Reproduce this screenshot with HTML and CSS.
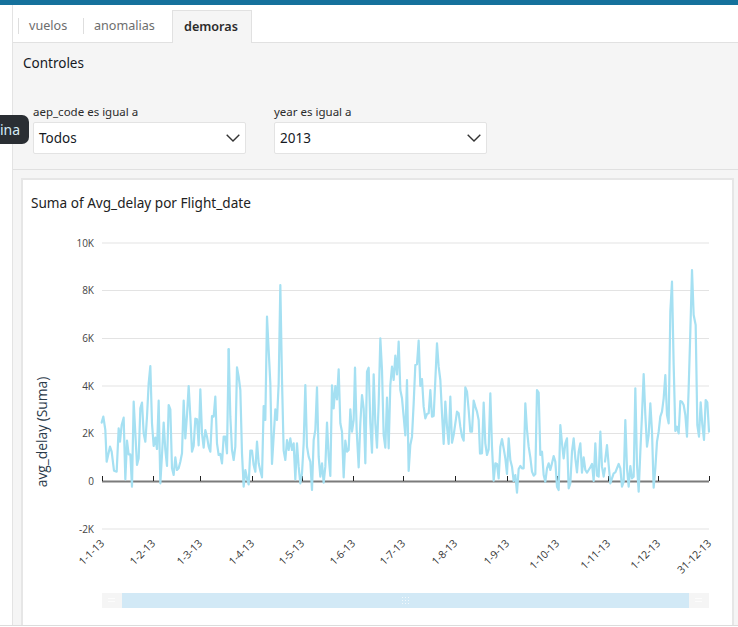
FILE: index.html
```html
<!DOCTYPE html>
<html lang="es">
<head>
<meta charset="utf-8">
<title>demoras</title>
<link rel="stylesheet" href="styles.css">
</head>
<body>
<div class="page">
  <div class="topbar"></div>
  <div class="body">
    <div class="rail"></div>
    <main class="main">
      <nav class="tabs">
        <div class="tab tab-first">vuelos</div>
        <div class="tab tab-second">anomalias</div>
        <div class="tab-active">demoras</div>
      </nav>
      <section class="controls">
        <h2 class="controls-title">Controles</h2>
        <div class="filters">
          <div class="filter">
            <div class="filter-label">aep_code es igual a</div>
            <div class="select"><span>Todos</span>
              <svg class="chevron" viewBox="0 0 14 8"><path d="M.7.7 7 7 13.3.7"/></svg>
            </div>
          </div>
          <div class="filter">
            <div class="filter-label">year es igual a</div>
            <div class="select"><span>2013</span>
              <svg class="chevron" viewBox="0 0 14 8"><path d="M.7.7 7 7 13.3.7"/></svg>
            </div>
          </div>
        </div>
      </section>
      <section class="sheet">
        <article class="card">
          <h3 class="card-title">Suma of Avg_delay por Flight_date</h3>
          <svg class="chart" viewBox="23 220 709 405">
            <g class="grid">
              <line x1="102" x2="709" y1="243" y2="243"/>
              <line x1="102" x2="709" y1="290.5" y2="290.5"/>
              <line x1="102" x2="709" y1="338.5" y2="338.5"/>
              <line x1="102" x2="709" y1="386" y2="386"/>
              <line x1="102" x2="709" y1="433.5" y2="433.5"/>
              <line x1="102" x2="709" y1="529" y2="529"/>
            </g>
            <g class="ylabels">
              <text x="94" y="246.5">10K</text>
              <text x="94" y="294">8K</text>
              <text x="94" y="342">6K</text>
              <text x="94" y="389.5">4K</text>
              <text x="94" y="437">2K</text>
              <text x="94" y="484.5">0</text>
              <text x="94" y="532.5">-2K</text>
            </g>
            <text class="ytitle" transform="rotate(-90 46.5 432)" x="46.5" y="432">avg_delay (Suma)</text>
            <line class="axis" x1="102" x2="709" y1="481.5" y2="481.5"/>
            <g class="ticks">
              <line x1="102.5" x2="102.5" y1="476" y2="481"/>
              <line x1="153.5" x2="153.5" y1="476" y2="481"/>
              <line x1="200.5" x2="200.5" y1="476" y2="481"/>
              <line x1="252.5" x2="252.5" y1="476" y2="481"/>
              <line x1="302.5" x2="302.5" y1="476" y2="481"/>
              <line x1="353.5" x2="353.5" y1="476" y2="481"/>
              <line x1="403.5" x2="403.5" y1="476" y2="481"/>
              <line x1="455.5" x2="455.5" y1="476" y2="481"/>
              <line x1="507.5" x2="507.5" y1="476" y2="481"/>
              <line x1="557.5" x2="557.5" y1="476" y2="481"/>
              <line x1="608.5" x2="608.5" y1="476" y2="481"/>
              <line x1="658.5" x2="658.5" y1="476" y2="481"/>
              <line x1="709.5" x2="709.5" y1="476" y2="481"/>
            </g>
            <g class="series">
              <polyline transform="translate(100 340) scale(.33333)" points="5,248 10,230 16,270 20,365 30,320 35,335 42,392 50,395 56,265 60,305 65,255 71,233 76,418 81,302 86,343 91,343 96,440 101,185 106,280 111,375 116,355 121,205 126,188 131,280 136,305 141,230 146,130 151,78 156,250 161,318 166,293 171,327 176,182 181,430 186,345 191,248 196,330 201,378 206,195 211,208 216,385 221,405 226,352 231,390 236,385 241,365 246,340 251,182 256,295 261,225 266,138 271,230 276,335 281,318 286,236 291,238 296,316 301,148 306,280 311,323 316,270 321,290 326,320 331,335 336,228 341,230 346,170 351,310 356,345 361,342 366,370 371,290 376,290 381,340 386,28"/>
              <polyline transform="translate(225 280) scale(.33333)" points="11,207 16,410 21,510 26,540 31,500 36,262 41,290 46,330 51,520 56,620 61,570 66,595 71,613 76,512 81,512 86,555 91,575 96,485 101,550 106,572 111,592 116,378 121,420 126,110 131,210 136,310 141,552 146,470 151,388 156,420 161,310 166,15 171,300 176,512 181,540 186,480 191,510 196,475 201,510 206,490 211,598 216,490 221,560 226,610 231,580 236,490 241,315 246,500 251,530 256,545 261,630 266,480 271,450 276,322 281,530 286,590 291,550 296,608 301,560 306,428 311,530 316,588 321,316 326,385 331,318 336,358 341,268 346,430 351,455 356,592 361,482 366,515 371,510 376,388 381,455 386,420 390,265"/>
              <polyline transform="translate(350 330) scale(.33333)" points="15,113 20,300 26,412 31,280 36,195 41,235 46,400 51,125 56,113 61,280 66,368 71,133 76,280 81,353 86,220 91,25 96,120 101,315 106,353 111,203 116,355 121,165 126,110 131,150 136,77 141,133 146,35 151,180 156,205 161,260 166,316 171,150 176,423 181,345 186,320 191,220 196,105 201,103 206,32 211,168 216,147 221,230 226,265 231,252 236,250 241,180 246,260 251,258 256,150 261,40 266,110 271,150 276,250 281,342 286,215 291,290 296,342 301,200 306,338 311,315 316,280 321,245 326,250 331,290 336,320 341,332 346,172 351,185 356,240 361,305 366,305 371,212 376,230 381,245 386,270 390,370"/>
              <polyline transform="translate(475 380) scale(.33333)" points="15,220 21,220 26,68 31,190 36,225 41,208 46,40 51,200 56,302 61,250 66,252 71,295 76,200 81,177 86,205 91,235 96,282 101,175 106,240 111,260 116,303 121,285 126,338 131,267 136,258 141,265 146,265 151,70 156,150 161,200 166,232 171,275 176,287 181,282 186,30 191,38 196,225 201,215 206,285 211,305 216,265 221,250 226,270 231,250 236,228 241,245 246,320 251,330 256,135 261,190 266,235 271,190 276,175 281,325 286,310 291,215 296,175 301,235 306,277 311,215 316,190 321,278 326,232 331,270 336,278 341,270 346,262 351,252 356,303 361,190 366,287 371,290 376,155 381,260 386,290 390,265"/>
              <polyline transform="translate(600 265) scale(.33333)" points="15,590 21,540 26,600 31,655 41,625 46,622 56,597 61,610 66,665 71,650 76,465 81,610 86,665 91,603 96,640 101,635 106,370 111,600 116,680 121,560 126,450 131,327 136,450 141,545 146,510 151,415 156,500 161,668 166,610 171,530 176,500 181,455 186,440 191,400 196,330 201,450 206,475 211,140 216,50 221,300 226,498 231,485 236,505 241,408 246,410 251,420 256,450 261,515 266,370 271,200 276,15 281,150 287,180 292,480 297,515 302,412 307,480 312,525 317,405 322,412 327,500"/>
            </g>
            <g class="xlabels">
              <text x="105" y="544" transform="rotate(-45 105 544)">1-1-13</text>
              <text x="156" y="544" transform="rotate(-45 156 544)">1-2-13</text>
              <text x="203" y="544" transform="rotate(-45 203 544)">1-3-13</text>
              <text x="255" y="544" transform="rotate(-45 255 544)">1-4-13</text>
              <text x="305" y="544" transform="rotate(-45 305 544)">1-5-13</text>
              <text x="356" y="544" transform="rotate(-45 356 544)">1-6-13</text>
              <text x="406" y="544" transform="rotate(-45 406 544)">1-7-13</text>
              <text x="458" y="544" transform="rotate(-45 458 544)">1-8-13</text>
              <text x="510" y="544" transform="rotate(-45 510 544)">1-9-13</text>
              <text x="560" y="544" transform="rotate(-45 560 544)">1-10-13</text>
              <text x="611" y="544" transform="rotate(-45 611 544)">1-11-13</text>
              <text x="661" y="544" transform="rotate(-45 661 544)">1-12-13</text>
              <text x="712" y="544" transform="rotate(-45 712 544)">31-12-13</text>
            </g>
            <rect class="zoom-track" x="102" y="593" width="607" height="15"/>
            <rect class="zoom-window" x="122" y="593" width="567" height="15"/>
            <g class="zoom-grip">
              <rect x="108" y="598" width="7" height="1"/>
              <rect x="108" y="601" width="7" height="1"/>
              <rect x="695" y="598" width="7" height="1"/>
              <rect x="695" y="601" width="7" height="1"/>
              <rect x="402" y="597" width="1" height="1"/>
              <rect x="405" y="597" width="1" height="1"/>
              <rect x="408" y="597" width="1" height="1"/>
              <rect x="402" y="600" width="1" height="1"/>
              <rect x="405" y="600" width="1" height="1"/>
              <rect x="408" y="600" width="1" height="1"/>
              <rect x="402" y="603" width="1" height="1"/>
              <rect x="405" y="603" width="1" height="1"/>
              <rect x="408" y="603" width="1" height="1"/>
            </g>
          </svg>
        </article>
      </section>
    </main>
  </div>
  <div class="footline"></div>
  <div class="tooltip">ina</div>
</div>
</body>
</html>
```
FILE: styles.css
```css
* { box-sizing: border-box; }
html, body { margin: 0; padding: 0; background: #fff; }
body { font-family: "Noto Sans", "Open Sans", sans-serif; color: #16191f; }

.page { position: relative; width: 738px; height: 627px; overflow: hidden; display: flex; flex-direction: column; }
.topbar { height: 5px; flex: none; background: #15719c; }
.body { flex: 1; min-height: 0; display: flex; }
.rail { width: 13px; flex: none; border-right: 1px solid #e3e3e3; background: #fff; }
.main { flex: 1; min-width: 0; display: flex; flex-direction: column; background: #f5f5f5; }
.footline { height: 2px; flex: none; border-top: 1px solid #dcdcdc; background: #fff; }

.tabs { height: 38px; flex: none; display: flex; align-items: flex-end; padding-left: 5px; background: #fff; border-bottom: 1px solid #e1e1e1; }
.tab { align-self: flex-start; margin-top: 13px; height: 16px; line-height: 16px; font-size: 12.6px; color: #6d6d6d; border-left: 1px solid #dedede; padding-left: 10px; }
.tab-first { width: 65px; }
.tab-second { width: 89px; }
.tab-active { width: 80px; height: 33px; margin-bottom: -1px; padding-left: 11px; line-height: 32px; font-size: 12.6px; font-weight: 600; color: #2b2b2b; background: #f5f5f5; border: 1px solid #e1e1e1; border-bottom: 0; }

.controls { height: 127px; flex: none; padding: 10px 10px 0; border-bottom: 1px solid #e0e0e0; }
.controls-title { margin: 0; font-size: 13.5px; font-weight: 400; line-height: 20px; color: #16191f; }
.filters { display: flex; gap: 28px; margin-top: 31px; padding-left: 10px; }
.filter { width: 213px; }
.filter-label { font-size: 11.5px; line-height: 16px; color: #2b2b2b; margin-bottom: 2px; }
.select { height: 32px; display: flex; align-items: center; justify-content: space-between; padding: 0 5px 0 5px; background: #fff; border: 1px solid #e3e3e3; border-radius: 2px; font-size: 13.5px; color: #16191f; }
.chevron { width: 14px; height: 8px; margin-right: 0; fill: none; stroke: #333; stroke-width: 1.4; }

.sheet { flex: 1; min-height: 0; padding: 8px 0 0 8px; }
.card { width: 713px; height: 100%; background: #fff; border: 2px solid #e6e6e6; border-bottom: 0; }
.card-title { margin: 0; padding: 14px 0 8px 8px; font-size: 13.6px; font-weight: 400; line-height: 18px; color: #222; }
.chart { display: block; width: 709px; height: 405px; }

.grid line { stroke: #e3e3e3; stroke-width: 1; }
.axis { stroke: #7b7b7b; stroke-width: 2; }
.ticks line { stroke: #222; stroke-width: 1; }
.ylabels text { font-family: "Open Sans", sans-serif; font-size: 10px; fill: #444; text-anchor: end; }
.xlabels text { font-family: "Open Sans", sans-serif; font-size: 10.5px; fill: #333; text-anchor: end; }
.ytitle { font-family: "Open Sans", sans-serif; font-size: 13.8px; fill: #2a3a4a; text-anchor: middle; }
.series polyline { fill: none; stroke: #a5e0f2; stroke-width: 6.6; stroke-linejoin: round; stroke-linecap: round; }
.zoom-track { fill: #f5f5f5; }
.zoom-window { fill: #d2e9f6; }
.zoom-grip rect { fill: #fff; opacity: .7; }

.tooltip { position: absolute; left: 0; top: 115px; width: 29px; height: 29px; padding-right: 9px; text-align: right; line-height: 29px; font-size: 14px; color: #d5ecf7; background: #2a2e33; border-radius: 0 7px 7px 0; }
```
